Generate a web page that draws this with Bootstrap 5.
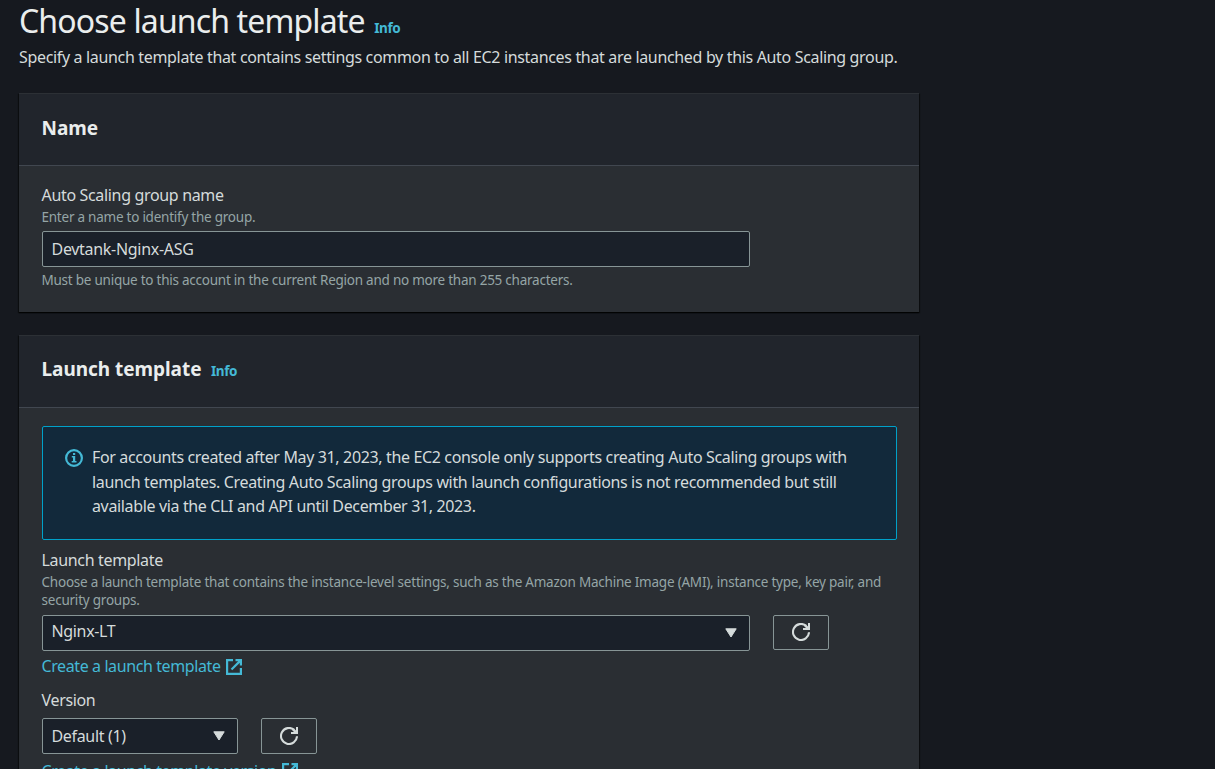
<!DOCTYPE html>
<html lang="en">
<head>
<meta charset="utf-8">
<meta name="viewport" content="width=device-width, initial-scale=1">
<title>Choose launch template</title>
<link href="https://cdn.jsdelivr.net/npm/bootstrap@5.3.0/dist/css/bootstrap.min.css" rel="stylesheet">
<style>
body{background:#16191f;color:#d5dbdb;font-family:"Noto Sans",sans-serif;font-size:16px;line-height:24px;letter-spacing:-.335px;height:769px;overflow:hidden}
.page{width:900px;margin-left:19px}
h1{font-size:32px;line-height:42px;font-weight:400;color:#eaeded;letter-spacing:-.86px}
h2{font-size:19px;line-height:26px;font-weight:700;color:#eaeded;letter-spacing:-.04px}
a,.info{color:#44b9d6;text-decoration:none}
.info{font-size:13.5px;line-height:22px;font-weight:700;letter-spacing:-.4px;margin-left:9.5px}
.intro{margin:3px 0 24px}
.panel{background:#2a2e33;border-top:1px solid #2c3035;box-shadow:0 1px 1px #000a,1px 1px 1px #0006,-1px 1px 1px #0006;margin-bottom:23px}
.p-name{height:219px}
.p-template{height:434px;margin-bottom:0}
.panel-head{height:72px;background:#21252c;border-bottom:1px solid #414750;padding:21px 22.5px}
.p-template .panel-head{padding-top:20px}
.panel-body{padding:17px 22px 0 23px}
.p-template .panel-body{padding-top:18px}
.hint{font-size:13.5px;line-height:18px;color:#95a5a6;letter-spacing:-.24px;margin-left:-.5px}
.p-template .hint{letter-spacing:-.222px}
.group-label{margin:0 0 1px -.5px}
.field{height:36px;background:#1a2029;border:1px solid #879596;border-radius:2px;color:#d5dbdb;padding:0 12px 0 8.5px}
input.field{letter-spacing:-.3px;margin:5px 0 4px}
.wide{width:708px}
.narrow{width:196px}
.refresh{width:56px;height:36px;border:1px solid #879596;border-radius:2px;background:transparent;padding:0;color:#d5dbdb}
.control{gap:23px}
.control.first{margin-top:6px}
.control.first .refresh{height:35px;padding-bottom:1px}
.control.second{margin-top:6px}
.link-row{gap:5px;margin-top:4px;letter-spacing:-.4px;margin-left:-.5px}
.link-row span{margin-top:-1px}
.control.second + .link-row span{margin-top:1px}
.field-label{margin:8px 0 1px -.5px}
.version-label{margin-top:10px;margin-left:-.5px}
.notice{height:114px;background:#12293b;border:1px solid #00a1c9;border-radius:2px;padding:18px 22px;line-height:24.5px;gap:9px;letter-spacing:-.355px}
.notice svg{margin-top:4px}
</style>
</head>
<body>
<svg class="d-none">
<symbol id="reload" viewBox="0 0 18 18"><path d="M17 9.3a8 8 0 1 1-2.8-6.4" fill="none" stroke="currentColor" stroke-width="2.1"/><path d="M16 0h2v7h-7V5h3l-1.8-1.8 1.6-1.6L16 3.5z" fill="currentColor"/></symbol>
<symbol id="external" viewBox="0 0 16 16"><path d="M7 1.1H1.1v13.8h13.8V9M9.5 1.1h5.4v5.4M14.9 1.1 5.5 10.5" fill="none" stroke="currentColor" stroke-width="2.2"/></symbol>
<symbol id="caret" viewBox="0 0 12 10"><path d="M.8.8h10.4L6 9z" fill="currentColor" stroke="currentColor" stroke-linejoin="round"/></symbol>
</svg>
<main class="page">
<div class="d-flex align-items-baseline"><h1 class="mb-0">Choose launch template</h1><a href="#" class="info">Info</a></div>
<p class="intro">Specify a launch template that contains settings common to all EC2 instances that are launched by this Auto Scaling group.</p>
<section class="panel p-name">
<div class="panel-head"><h2 class="mb-0">Name</h2></div>
<div class="panel-body">
<label class="group-label d-block" for="gname">Auto Scaling group name</label>
<div class="hint">Enter a name to identify the group.</div>
<input id="gname" class="field wide d-block" value="Devtank-Nginx-ASG">
<div class="hint">Must be unique to this account in the current Region and no more than 255 characters.</div>
</div>
</section>
<section class="panel p-template">
<div class="panel-head d-flex align-items-baseline"><h2 class="mb-0">Launch template</h2><a href="#" class="info">Info</a></div>
<div class="panel-body">
<div class="notice d-flex">
<svg class="flex-shrink-0" width="18" height="18" viewBox="0 0 18 18"><circle cx="9" cy="9" r="7.9" fill="none" stroke="#44b9d6" stroke-width="2.2"/><path d="M8 4h2.2v2H8zM6.8 7h3.4v5h1.3v1.5H6.7V12H8V8.5H6.8z" fill="#44b9d6"/></svg>
<div>For accounts created after May 31, 2023, the EC2 console only supports creating Auto Scaling groups with<br>launch templates. Creating Auto Scaling groups with launch configurations is not recommended but still<br>available via the CLI and API until December 31, 2023.</div>
</div>
<div class="field-label">Launch template</div>
<div class="hint">Choose a launch template that contains the instance-level settings, such as the Amazon Machine Image (AMI), instance type, key pair, and<br>security groups.</div>
<div class="control first d-flex"><div class="field wide d-flex align-items-center justify-content-between"><span class="pb-1">Nginx-LT</span><svg width="12" height="10"><use href="#caret"/></svg></div><button class="refresh d-flex align-items-center justify-content-center" aria-label="Refresh templates"><svg width="18" height="18"><use href="#reload"/></svg></button></div>
<a href="#" class="link-row d-flex align-items-center"><span>Create a launch template</span><svg width="16" height="16"><use href="#external"/></svg></a>
<div class="version-label">Version</div>
<div class="control second d-flex"><div class="field narrow d-flex align-items-center justify-content-between"><span>Default (1)</span><svg width="12" height="10"><use href="#caret"/></svg></div><button class="refresh d-flex align-items-center justify-content-center" aria-label="Refresh versions"><svg width="18" height="18"><use href="#reload"/></svg></button></div>
<a href="#" class="link-row d-flex align-items-center"><span>Create a launch template version</span><svg width="16" height="16"><use href="#external"/></svg></a>
</div>
</section>
</main>
<script src="https://cdn.jsdelivr.net/npm/bootstrap@5.3.0/dist/js/bootstrap.bundle.min.js"></script>
</body>
</html>
